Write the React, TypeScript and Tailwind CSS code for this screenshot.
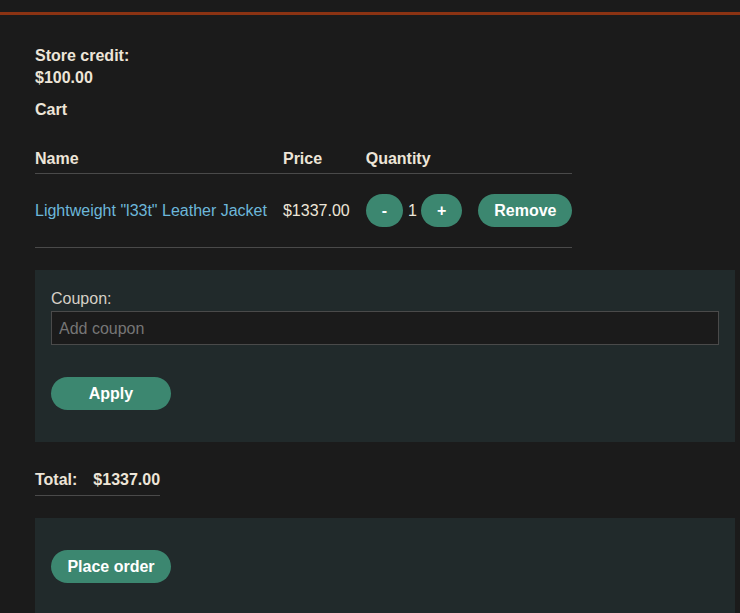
import { useState } from "react";

const cart = [
	{ name: 'Lightweight "l33t" Leather Jacket', price: "$1337.00", qty: 1 },
];

const btn =
	"rounded-full bg-[#3c8770] text-white font-bold text-base leading-[33px] h-[33px]";

export default function App() {
	const [coupon, setCoupon] = useState("");

	return (
		<div className="min-h-screen bg-[#1b1b1b] font-['Liberation_Sans',Arial,sans-serif] text-base text-[#ede5d8]">
			{/* top accent bar */}
			<div className="h-3" />
			<div className="h-[3px] bg-[#8b3313]" />

			<div className="pl-[35px] pt-[30px]">
				<p className="font-bold leading-[22px]">Store credit:</p>
				<p className="font-bold leading-[22px]">$100.00</p>
				<h2 className="mt-[10px] font-bold leading-[22px]">Cart</h2>

				{/* cart table */}
				<table className="mt-[26px] border-collapse">
					<thead>
						<tr className="border-b border-[#4a4a4a]">
							<th className="pr-4 pt-px pb-[3px] text-left font-bold leading-[22px]">Name</th>
							<th className="pr-4 pt-px pb-[3px] text-left font-bold leading-[22px]">Price</th>
							<th className="pr-4 pt-px pb-[3px] text-left font-bold leading-[22px]">Quantity</th>
							<th className="pt-px pb-[3px]" />
						</tr>
					</thead>
					<tbody>
						{cart.map(item => (
							<tr key={item.name} className="border-b border-[#4a4a4a]">
								<td className="pr-4 py-5 leading-[22px]">
									<a href="#" className="text-[#6cb7da]">
										{item.name}
									</a>
								</td>
								<td className="pr-4 py-5 leading-[22px]">{item.price}</td>
								<td className="pr-4 py-5">
									<div className="flex items-center">
										<button className={`${btn} px-4`}>-</button>
										<span className="ml-[5px] mr-[4px] leading-[22px]">{item.qty}</span>
										<button className={`${btn} px-4`}>+</button>
									</div>
								</td>
								<td className="py-5">
									<button className={`${btn} pl-4 pr-[15px]`}>Remove</button>
								</td>
							</tr>
						))}
					</tbody>
				</table>

				{/* coupon form */}
				<div className="mt-[22px] w-[700px] bg-[#212a2b] px-4 pt-[18px] pb-8">
					<label className="block leading-[22px] text-[#d6d0c6]">Coupon:</label>
					<input
						type="text"
						placeholder="Add coupon"
						value={coupon}
						onChange={e => setCoupon(e.target.value)}
						className="mt-px block h-[34px] w-full border border-[#4a4a4a] bg-[#1b1b1b] px-[7px] pt-px text-[#d6d0c6] placeholder:text-[#767676] outline-none"
					/>
					<button className={`${btn} mt-8 w-[120px]`}>Apply</button>
				</div>

				{/* total */}
				<div className="mt-[27px] inline-flex gap-4 border-b border-[#4a4a4a] pb-[4px] font-bold leading-[22px]">
					<span>Total:</span>
					<span>$1337.00</span>
				</div>

				{/* checkout */}
				<div className="mt-[22px] w-[700px] bg-[#212a2b] px-4 pt-8 pb-8">
					<button className={`${btn} w-[120px]`}>Place order</button>
				</div>
			</div>
		</div>
	);
}
